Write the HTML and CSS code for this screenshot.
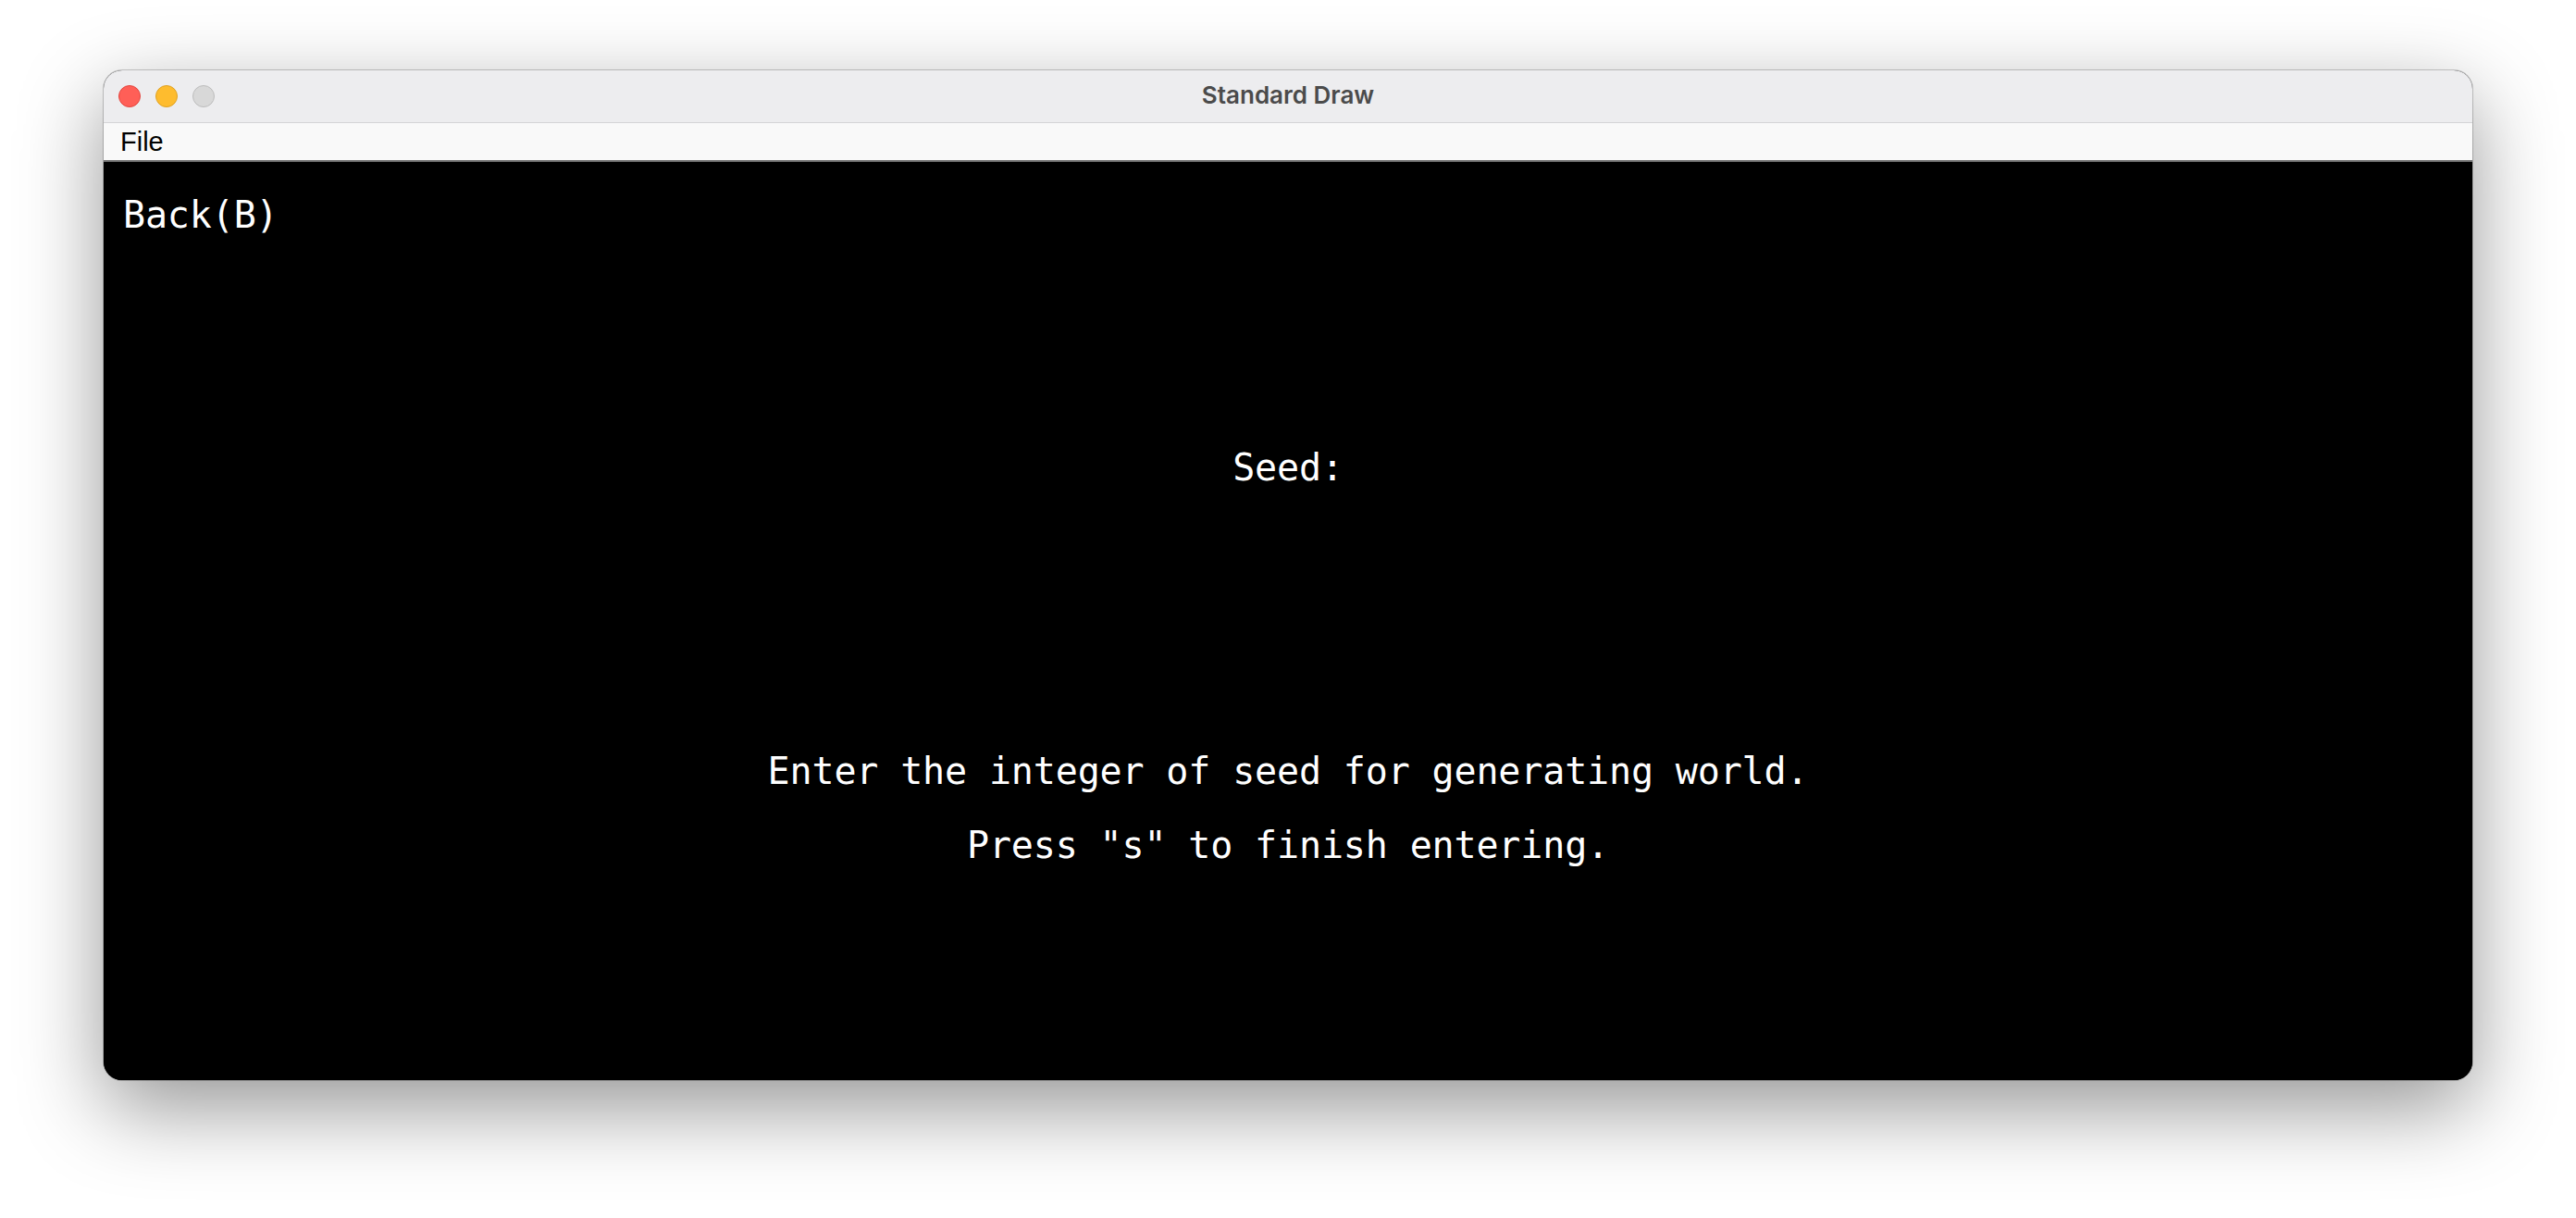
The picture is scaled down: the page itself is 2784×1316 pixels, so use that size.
FILE: index.html
```html
<!DOCTYPE html>
<html>
<head>
<meta charset="utf-8">
<title>Standard Draw</title>
<link rel="stylesheet" href="styles.css">
</head>
<body>
<div class="window">
  <div class="titlebar">
    <div class="lights">
      <span class="light red"></span>
      <span class="light yellow"></span>
      <span class="light grey"></span>
    </div>
    <div class="title">Standard Draw</div>
  </div>
  <div class="menubar"><span class="menu">File</span></div>
  <div class="canvas">
    <div class="line back">Back(B)</div>
    <div class="line seed">Seed:</div>
    <div class="line enter">Enter the integer of seed for generating world.</div>
    <div class="line press">Press "s" to finish entering.</div>
  </div>
</div>
</body>
</html>
```
FILE: styles.css
```css
html, body {
  margin: 0;
  padding: 0;
  background: #ffffff;
}
body {
  padding: 76px 112px 0 112px;
  height: 1316px;
  box-sizing: border-box;
  overflow: hidden;
}
.window {
  height: 1091px;
  border-radius: 20px;
  overflow: hidden;
  display: flex;
  flex-direction: column;
  box-shadow: 0 30px 90px rgba(0,0,0,0.42), 0 0 0 1px rgba(0,0,0,0.2);
  background: #000;
}
.titlebar {
  height: 56px;
  flex: none;
  background: #ededef;
  border-bottom: 1px solid #d4d4d6;
  display: flex;
  align-items: center;
  justify-content: center;
  position: relative;
}
.lights {
  position: absolute;
  left: 16px;
  top: 16px;
  display: flex;
  gap: 16px;
}
.light {
  width: 24px;
  height: 24px;
  border-radius: 50%;
  box-sizing: border-box;
}
.red { background: #ff5f57; border: 1px solid #e2463f; }
.yellow { background: #febc2e; border: 1px solid #dfa123; }
.grey { background: #d8d8d8; border: 1px solid #bcbcbc; }
.title {
  font-family: Inter, "Liberation Sans", sans-serif;
  font-weight: 600;
  font-size: 26px;
  color: #4b4b4b;
  margin-top: -3px;
}
.menubar {
  height: 40px;
  flex: none;
  background: #f9f9f9;
  border-bottom: 2px solid #6e6e6e;
  padding-left: 18px;
  display: flex;
  align-items: center;
}
.menu {
  font-family: "Liberation Sans", Arial, sans-serif;
  font-size: 29px;
  line-height: 40px;
  color: #000;
}
.canvas {
  flex: 1;
  background: #000;
  display: flex;
  flex-direction: column;
  padding: 34px 0 0 0;
}
.line {
  font-family: "DejaVu Sans Mono", monospace;
  font-size: 40px;
  letter-spacing: -0.15px;
  line-height: 46px;
  color: #ffffff;
  white-space: pre;
}
.back {
  padding-left: 21px;
}
.seed {
  text-align: center;
  margin-top: 227px;
}
.enter {
  text-align: center;
  margin-top: 282px;
}
.press {
  text-align: center;
  margin-top: 34px;
}
```
